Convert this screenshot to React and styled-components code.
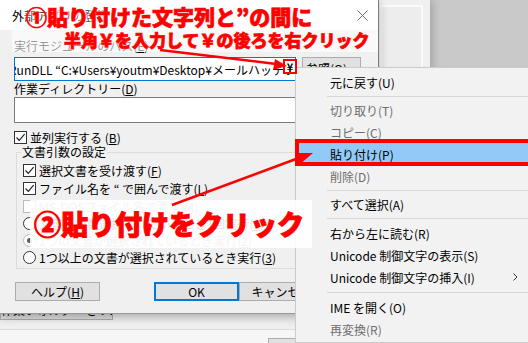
import React from "react";
import styled, { createGlobalStyle, css } from "styled-components";

const UI_FONT = `"Noto Sans CJK JP", "Noto Sans", sans-serif`;

const GlobalStyle = createGlobalStyle`
  html, body {
    margin: 0;
    padding: 0;
    background: #c9c9c9;
    overflow: hidden;
  }
  * { box-sizing: border-box; }
`;

const menuItems = [
  { id: "undo", label: "元に戻す(U)" },
  { id: "s1", sep: 6 },
  { id: "cut", label: "切り取り(T)", disabled: true },
  { id: "copy", label: "コピー(C)", disabled: true },
  { id: "paste", label: "貼り付け(P)", active: true },
  { id: "del", label: "削除(D)", disabled: true },
  { id: "s2", sep: 6 },
  { id: "all", label: "すべて選択(A)" },
  { id: "s3", sep: 7 },
  { id: "rtl", label: "右から左に読む(R)" },
  { id: "show", label: "Unicode 制御文字の表示(S)" },
  { id: "ins", label: "Unicode 制御文字の挿入(I)", submenu: true },
  { id: "s4", sep: 8 },
  { id: "ime", label: "IME を開く(O)" },
  { id: "conv", label: "再変換(R)", disabled: true },
];

function CheckBox({ checked, disabled }) {
  return (
    <Box $disabled={disabled}>
      {checked && (
        <svg width="11" height="11" viewBox="0 0 11 11">
          <path d="M1.5 5.5 L4.3 8.3 L9.6 2.2" fill="none" stroke="#222" strokeWidth="1.2" />
        </svg>
      )}
    </Box>
  );
}

function App() {
  return (
    <>
      <GlobalStyle />
      <Desktop>
        <BackWindow>
          <BackTop>
            <BackFrame />
          </BackTop>
          <BackButton>作業フォルダーをリストに追加</BackButton>
          <BackRule />
          <BackBottom>
            <BackSmallButton />
          </BackBottom>
        </BackWindow>

        <Dialog>
          <TitleBar>
            <Title>外部アプリの登録</Title>
            <CloseButton>
              <svg width="11" height="11" viewBox="0 0 11 11">
                <path d="M0.5 0.5 L10.5 10.5 M10.5 0.5 L0.5 10.5" stroke="#6a6a6a" strokeWidth="1" />
              </svg>
            </CloseButton>
          </TitleBar>
          <Body>
            <Label>
              実行モジュールのパス(<u>E</u>)
            </Label>
            <FieldRow>
              <Input $focused $h={24}>
                <InputText>RunDLL “C:¥Users¥youtm¥Desktop¥メールハッテファイル</InputText>
              </Input>
              <Button $w={59} $h={23}>参照(O)...</Button>
            </FieldRow>
            <Label>
              作業ディレクトリー(<u>D</u>)
            </Label>
            <Input $h={26} />
            <CheckRow $top={5}>
              <CheckBox checked />
              並列実行する (<u>B</u>)
            </CheckRow>
            <Group>
              <Legend>文書引数の設定</Legend>
              <CheckRow>
                <CheckBox checked />
                選択文書を受け渡す(<u>F</u>)
              </CheckRow>
              <CheckRow>
                <CheckBox checked />
                ファイル名を “ で囲んで渡す(<u>L</u>)
              </CheckRow>
              <CheckRow $disabled>
                <CheckBox disabled />
                MS-DOSファイル名で渡す(<u>M</u>)
              </CheckRow>
              <RadioRow>
                <Radio />
                文書が複数選択されているとき1回実行(<u>1</u>)
              </RadioRow>
              <RadioRow $disabled>
                <Radio $checked $disabled />
                1つの文書が選択されているとき実行(<u>2</u>)
              </RadioRow>
              <RadioRow>
                <Radio />
                1つ以上の文書が選択されているとき実行(<u>3</u>)
              </RadioRow>
            </Group>
            <ButtonRow>
              <Button $w={85} $h={19} $gapAfter={54}>
                ヘルプ(<u>H</u>)
              </Button>
              <Button $w={85} $h={19} $primary>
                OK
              </Button>
              <Button $w={85} $h={19}>
                キャンセル
              </Button>
            </ButtonRow>
          </Body>
        </Dialog>

        <Menu>
          {menuItems.map((item) =>
            item.sep ? (
              <Separator key={item.id} $h={item.sep} />
            ) : (
              <MenuItem key={item.id} $disabled={item.disabled} $active={item.active}>
                {item.label}
                {item.submenu && (
                  <SubArrow>
                    <svg width="5" height="8" viewBox="0 0 5 8">
                      <path d="M0.5 0.5 L4 4 L0.5 7.5" fill="none" stroke="#333" strokeWidth="1" />
                    </svg>
                  </SubArrow>
                )}
              </MenuItem>
            )
          )}
        </Menu>

        <NoteTop>
          <NoteLine1>①貼り付けた文字列と”の間に</NoteLine1>
          <NoteLine2>半角￥を入力して￥の後ろを右クリック</NoteLine2>
        </NoteTop>
        <YenMark>¥</YenMark>
        <PasteMark />
        <NoteBottom>②貼り付けをクリック</NoteBottom>

        <Arrows width="528" height="343" viewBox="0 0 528 343">
          <line x1="160" y1="50" x2="276" y2="64" stroke="#ff0000" strokeWidth="2.5" />
          <polygon points="287,66 273,70 275,59" fill="#ff0000" />
          <line x1="172" y1="205" x2="300" y2="157.5" stroke="#ff0000" strokeWidth="2.5" />
          <polygon points="313,153 299,165 295,153" fill="#ff0000" />
        </Arrows>
      </Desktop>
    </>
  );
}

const Desktop = styled.div`
  position: relative;
  width: 528px;
  height: 343px;
  overflow: hidden;
  background: #c9c9c9;
  font-family: ${UI_FONT};
  font-size: 12px;
  color: #000;
`;

const BackWindow = styled.div`
  position: absolute;
  left: 0;
  top: 0;
  width: 430px;
  height: 343px;
  display: flex;
  flex-direction: column;
  background: #f0f0f0;
  box-shadow: 3px 0 8px rgba(0, 0, 0, 0.18);
`;

const BackTop = styled.div`
  flex: 1;
  display: flex;
  justify-content: flex-end;
  padding: 5px 7px 0 0;
`;

const BackFrame = styled.div`
  width: 43px;
  height: 100%;
  border: 2px solid #fbfbfb;
  border-bottom: none;
  background: #ededed;
`;

const BackButton = styled.div`
  width: 113px;
  height: 21px;
  line-height: 19px;
  background: #e1e1e1;
  border: 1px solid #adadad;
  white-space: nowrap;
  overflow: hidden;
  text-align: center;
  margin-bottom: 9px;
`;

const BackRule = styled.div`
  height: 1px;
  background: #dadada;
`;

const BackBottom = styled.div`
  height: 13px;
  background: #f6f6f6;
  padding: 8px 0 0 268px;
`;

const BackSmallButton = styled.div`
  width: 80px;
  height: 20px;
  background: #e1e1e1;
  border: 1px solid #adadad;
`;

const Dialog = styled.div`
  position: absolute;
  left: 0;
  top: 0;
  width: 379px;
  height: 314px;
  display: flex;
  flex-direction: column;
  background: #f0f0f0;
  border-right: 1px solid #7f7f7f;
  border-bottom: 1px solid #9a9a9a;
  box-shadow: 0 3px 9px rgba(0, 0, 0, 0.3);
`;

const TitleBar = styled.div`
  display: flex;
  align-items: center;
  height: 30px;
  flex-shrink: 0;
  padding-left: 12px;
  background: #fff;
`;

const Title = styled.span`
  color: #000;
`;

const CloseButton = styled.div`
  display: flex;
  align-items: center;
  justify-content: center;
  width: 32px;
  height: 30px;
  margin-left: auto;
`;

const Body = styled.div`
  display: flex;
  flex-direction: column;
  padding: 8px 16px 0 14px;
`;

const Label = styled.div`
  height: 16px;
  line-height: 16px;
  white-space: nowrap;
`;

const FieldRow = styled.div`
  display: flex;
  align-items: flex-start;
  gap: 6px;
  margin: 3px 0 0;
`;

const Input = styled.div`
  width: 282px;
  height: ${({ $h }) => $h}px;
  background: #fff;
  border: 1px solid ${({ $focused }) => ($focused ? "#0078d7" : "#7a7a7a")};
  overflow: hidden;
  display: flex;
  align-items: center;
`;

const InputText = styled.span`
  white-space: nowrap;
  margin-left: -6px;
`;

const Button = styled.div`
  flex-shrink: 0;
  display: flex;
  align-items: center;
  justify-content: center;
  width: ${({ $w }) => $w}px;
  height: ${({ $h }) => $h}px;
  margin-right: ${({ $gapAfter }) => $gapAfter || 0}px;
  background: #e1e1e1;
  border: 1px solid #adadad;
  white-space: nowrap;
  overflow: hidden;

  ${({ $primary }) =>
    $primary &&
    css`
      border: 2px solid #0078d7;
    `}
`;

const Box = styled.span`
  flex-shrink: 0;
  display: flex;
  align-items: center;
  justify-content: center;
  width: 13px;
  height: 13px;
  margin-right: 3px;
  background: #fff;
  border: 1px solid ${({ $disabled }) => ($disabled ? "#bcbcbc" : "#333")};
`;

const CheckRow = styled.div`
  display: flex;
  align-items: center;
  height: 18px;
  margin-top: ${({ $top }) => $top || 0}px;
  white-space: nowrap;
  color: ${({ $disabled }) => ($disabled ? "#a0a0a0" : "#000")};
`;

const RadioRow = styled(CheckRow)`
  height: 17px;
`;

const Radio = styled.span`
  flex-shrink: 0;
  position: relative;
  width: 13px;
  height: 13px;
  margin-right: 3px;
  border-radius: 50%;
  background: #fff;
  border: 1px solid ${({ $disabled }) => ($disabled ? "#bcbcbc" : "#333")};

  ${({ $checked }) =>
    $checked &&
    css`
      &::after {
        content: "";
        position: absolute;
        left: 3px;
        top: 3px;
        width: 5px;
        height: 5px;
        border-radius: 50%;
        background: #5a5a5a;
      }
    `}
`;

const Group = styled.fieldset`
  min-width: 0;
  margin: -1px 0 0 2px;
  padding: 0 8px 2px 6px;
  border: 1px solid #dcdcdc;
`;

const Legend = styled.legend`
  padding: 0 1px;
  margin-left: -2px;
  line-height: 14px;
  margin-bottom: 2px;
`;

const ButtonRow = styled.div`
  display: flex;
  margin-top: 13px;
  padding-left: 1px;
`;

const Menu = styled.div`
  position: absolute;
  left: 295px;
  top: 67px;
  width: 240px;
  height: 276px;
  padding: 3px 2px;
  background: #f2f2f2;
  border: 1px solid #cccccc;
  box-shadow: 2px 2px 3px rgba(0, 0, 0, 0.25);
`;

const MenuItem = styled.div`
  display: flex;
  align-items: center;
  height: 22px;
  padding: 0 14px 0 32px;
  white-space: nowrap;
  color: ${({ $disabled }) => ($disabled ? "#6d6d6d" : "#000")};
  background: ${({ $active }) => ($active ? "#91c9f7" : "transparent")};
`;

const SubArrow = styled.span`
  display: flex;
  margin-left: auto;
`;

const Separator = styled.div`
  height: ${({ $h }) => $h}px;
  margin: 0 3px 0 29px;
  display: flex;
  align-items: center;

  &::after {
    content: "";
    flex: 1;
    height: 1px;
    background: #d7d7d7;
  }
`;

const NoteTop = styled.div`
  position: absolute;
  left: 12px;
  top: 0;
  width: 366px;
  display: flex;
  flex-direction: column;
  font-family: ${UI_FONT};
  font-weight: 900;
  color: #ff0000;
  white-space: nowrap;
  -webkit-text-stroke: 0.7px #ff0000;
`;

const NoteLine1 = styled.div`
  height: 30px;
  line-height: 32px;
  padding-left: 14px;
  font-size: 21px;
  text-shadow: 0 0 2px #fff, 0 0 4px #fff, 0 0 5px #fff;
`;

const NoteLine2 = styled.div`
  height: 22px;
  line-height: 20px;
  padding-left: 52px;
  font-size: 17px;
  background: rgba(255, 255, 255, 0.6);
`;

const YenMark = styled.div`
  position: absolute;
  left: 283px;
  top: 59px;
  width: 14px;
  height: 15px;
  display: flex;
  align-items: center;
  justify-content: center;
  background: #fff;
  border: 2px solid #ff0000;
  font-size: 11px;
  font-weight: 700;
`;

const PasteMark = styled.div`
  position: absolute;
  left: 295px;
  top: 139px;
  width: 240px;
  height: 27px;
  border: 4px solid #ff0000;
`;

const NoteBottom = styled.div`
  position: absolute;
  left: 30px;
  top: 200px;
  width: 282px;
  height: 48px;
  padding-left: 4px;
  line-height: 48px;
  background: rgba(255, 255, 255, 0.88);
  font-family: ${UI_FONT};
  font-weight: 900;
  font-size: 27px;
  color: #ff0000;
  white-space: nowrap;
  -webkit-text-stroke: 1px #ff0000;
`;

const Arrows = styled.svg`
  position: absolute;
  left: 0;
  top: 0;
  pointer-events: none;
`;

export default App;
